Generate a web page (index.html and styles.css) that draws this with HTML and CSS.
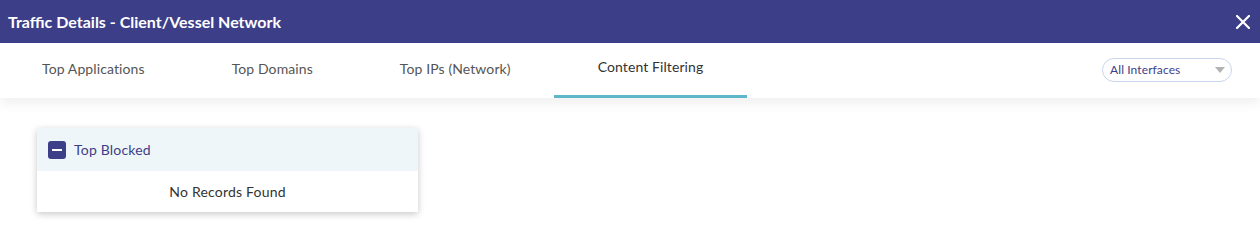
FILE: index.html
```html
<!DOCTYPE html>
<html>
<head>
<meta charset="utf-8">
<link rel="stylesheet" href="styles.css">
</head>
<body>
<div class="dialog">
  <header class="titlebar">
    <h1 class="title">Traffic Details - Client/Vessel Network</h1>
    <button class="close" aria-label="Close">
      <svg width="14" height="14" viewBox="0 0 14 14"><path d="M1 1L13 13M13 1L1 13" stroke="#fff" stroke-width="2.2" stroke-linecap="square"/></svg>
    </button>
  </header>
  <nav class="tabbar">
    <div class="tabs">
      <div class="tab">Top Applications</div>
      <div class="tab">Top Domains</div>
      <div class="tab">Top IPs (Network)</div>
      <div class="tab active">Content Filtering</div>
    </div>
    <div class="select">
      <span class="select-label">All Interfaces</span>
      <svg class="caret" width="10" height="6" viewBox="0 0 10 6"><path d="M0 0H10L5 6Z" fill="#b3b3b3"/></svg>
    </div>
  </nav>
  <main class="content">
    <section class="card">
      <div class="card-head">
        <span class="toggle"><span class="toggle-bar"></span></span>
        <span class="card-title">Top Blocked</span>
      </div>
      <div class="card-body">No Records Found</div>
    </section>
  </main>
</div>
</body>
</html>
```
FILE: styles.css
```css
* { box-sizing: border-box; }
html, body { margin: 0; padding: 0; background: #fff; }
body { font-family: "Lato", "Open Sans", sans-serif; color: #333; }
.dialog { width: 1260px; height: 246px; overflow: hidden; }
.titlebar {
  height: 43px;
  background: #3d3e88;
  display: flex;
  align-items: center;
  justify-content: space-between;
  padding: 0 10px 0 8px;
}
.title { margin: 0; font-size: 16px; font-weight: 700; color: #fff; letter-spacing: 0; }
.close { background: none; border: 0; padding: 0; width: 14px; height: 14px; display: flex; }
.tabbar {
  height: 55px;
  display: flex;
  align-items: stretch;
  justify-content: space-between;
  padding-right: 28px;
  box-shadow: 0 6px 10px rgba(0,0,0,0.06);
  position: relative;
}
.tabs { display: flex; margin-left: -1.5px; }
.tab {
  padding: 0 43.5px;
  display: flex;
  align-items: center;
  font-size: 14px;
  letter-spacing: 0.1px;
  color: #555;
  border-bottom: 3px solid transparent;
  padding-bottom: 2px;
}
.tab.active { color: #333; border-bottom-color: #5db7c9; padding-bottom: 6px; }
.select {
  align-self: center;
  margin-top: -2px;
  width: 130px;
  height: 24px;
  border: 1px solid #c9d6ee;
  border-radius: 12px;
  display: flex;
  align-items: center;
  justify-content: space-between;
  padding: 0 6px 0 7px;
}
.select-label { font-size: 12px; color: #3d3e88; letter-spacing: 0.1px; }
.caret { margin-top: 1px; }
.content { padding: 30px 0 0 37px; }
.card {
  width: 381px;
  box-shadow: 0 2px 7px rgba(0,0,0,0.22);
  background: #fff;
}
.card-head {
  height: 43px;
  background: #eff6fa;
  display: flex;
  align-items: center;
  padding-left: 11px;
  gap: 8px;
}
.toggle {
  width: 18px; height: 18px;
  border-radius: 3px;
  background: #3d3e88;
  display: flex; align-items: center; justify-content: center;
}
.toggle-bar { width: 10px; height: 2px; background: #fff; }
.card-title { font-size: 14px; color: #3d3e88; letter-spacing: 0.2px; }
.card-body {
  height: 41px;
  display: flex;
  align-items: center;
  justify-content: center;
  font-size: 14px;
  letter-spacing: 0.2px;
  color: #333;
}
```
